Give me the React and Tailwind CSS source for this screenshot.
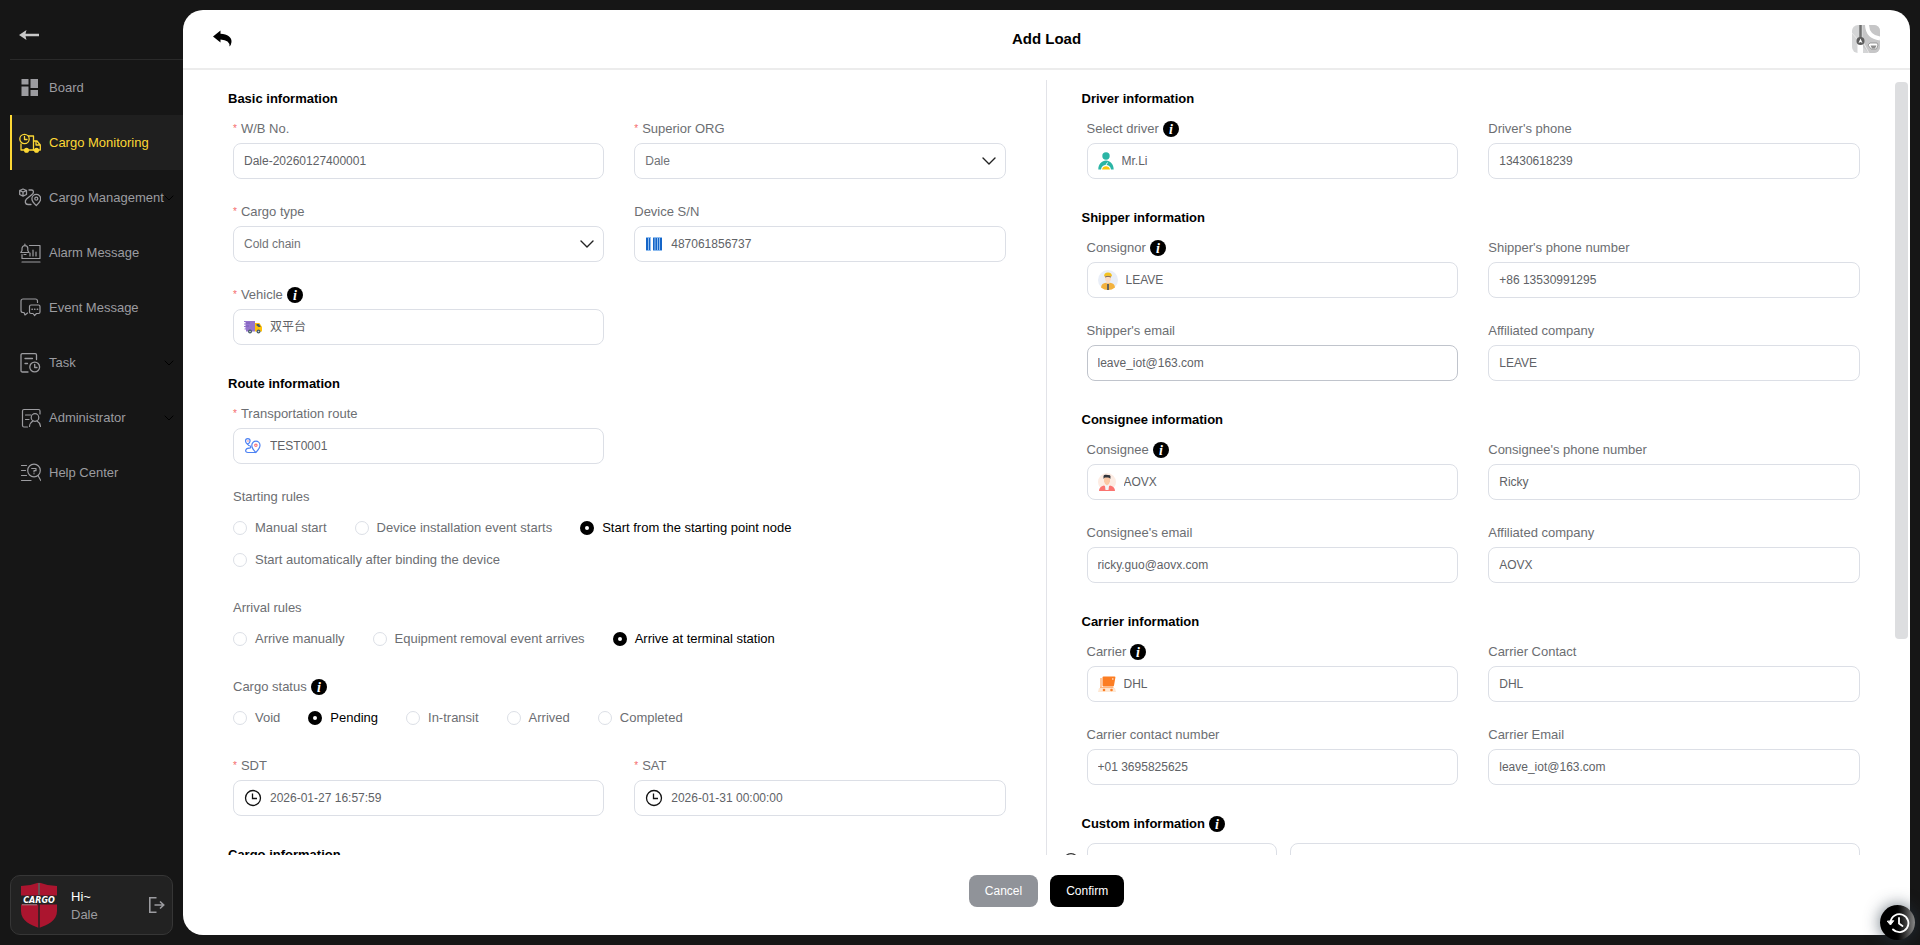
import React, { useId, useState } from "react";

const stroke = {
  fill: "none",
  stroke: "currentColor",
  strokeLinecap: "round",
  strokeLinejoin: "round",
};

function BoardIcon() {
  return (
    <svg width="22" height="22" viewBox="0 0 22 22" className="shrink-0" fill="currentColor">
      <rect x="2.500" y="2" width="7" height="5.500" />
      <rect x="11.500" y="2" width="7.500" height="9" />
      <rect x="2.500" y="9.500" width="7" height="9.500" />
      <rect x="11.500" y="13" width="7.500" height="6" />
    </svg>
  );
}

function MonitoringIcon() {
  return (
    <svg width="22" height="22" viewBox="0 0 22 22" className="shrink-0" {...stroke} strokeWidth="1.3">
      <circle cx="5.500" cy="7" r="4.700" />
      <path d="M5.500 4.500V7.500H8" />
      <path d="M9.500 4H14.500V18H10M2 12V18H5" />
      <path d="M14.500 9H18L21.300 13V18H20M14.500 18H15M17 9V13H21" />
      <circle cx="7.500" cy="18.300" r="1.900" fill="currentColor" />
      <circle cx="17.500" cy="18.300" r="1.900" fill="currentColor" />
    </svg>
  );
}

function ManagementIcon() {
  return (
    <svg width="22" height="22" viewBox="0 0 22 22" className="shrink-0" {...stroke} strokeWidth="1.3">
      <path d="M4 2L7.500 3.500V7.500L4 9.200L0.700 7.500V3.500ZM0.700 3.500L4 5.200L7.500 3.500M4 5.200V9" />
      <path d="M10 3H12.500C15 3 15 6 13 7.500L7.500 12C5.500 14 6 17.500 9 17.500H12" />
      <path d="M17.300 18.500C14.500 16 12.900 14 12.900 11.700A4.400 4.400 0 0 1 21.700 11.700C21.700 14 20 16 17.300 18.500Z" />
      <circle cx="17.300" cy="11.700" r="1.500" />
    </svg>
  );
}

function AlarmIcon() {
  return (
    <svg width="22" height="22" viewBox="0 0 22 22" className="shrink-0" {...stroke} strokeWidth="1.2">
      <path d="M10.500 3.500H21V16.500H3V12.500" />
      <path d="M3 8.500V6.500A2.900 2.900 0 0 1 8.800 6.500V8.500L10 10.500H1.800ZM5.900 2V3.200M5 12.500H7" />
      <path d="M11 14V11M14 14V8M17 14V10M3 20H21" />
    </svg>
  );
}

function EventIcon() {
  return (
    <svg width="22" height="22" viewBox="0 0 22 22" className="shrink-0" {...stroke} strokeWidth="1.2">
      <path d="M18.500 5.500V4A2 2 0 0 0 16.500 2H4A2 2 0 0 0 2 4V13.500A2 2 0 0 0 4 15.500H5L6 18L8.500 16" />
      <path d="M12 8H19.500A1.500 1.500 0 0 1 21 9.500V15A1.500 1.500 0 0 1 19.500 16.500H17.500L15.500 18.500L14 16.500H12A1.500 1.500 0 0 1 10.500 15V9.500A1.500 1.500 0 0 1 12 8Z" />
      <path d="M13 12.300H13.300M15.600 12.300H15.900M18.300 12.300H18.600" strokeWidth="1.500" />
    </svg>
  );
}

function TaskIcon() {
  return (
    <svg width="22" height="22" viewBox="0 0 22 22" className="shrink-0" {...stroke} strokeWidth="1.3">
      <path d="M17.500 7.500V3A1.300 1.300 0 0 0 16.200 1.700H3.300A1.300 1.300 0 0 0 2 3V18.700A1.300 1.300 0 0 0 3.300 20H9" />
      <path d="M6 6.500H13.500M6 11.500H8.500" />
      <circle cx="15.700" cy="15" r="4.900" />
      <path d="M15.700 12.300V15.500H18" />
    </svg>
  );
}

function AdminIcon() {
  return (
    <svg width="22" height="22" viewBox="0 0 22 22" className="shrink-0" {...stroke} strokeWidth="1.2">
      <path d="M21 7V4A1.500 1.500 0 0 0 19.500 2.500H5A1.500 1.500 0 0 0 3.500 4V18.500A1.500 1.500 0 0 0 5 20H8.500" />
      <path d="M6.500 8H12M6.500 12.500H10" />
      <circle cx="16" cy="10.500" r="3.800" />
      <path d="M10.500 19.500C10.800 16.500 12.500 14.800 14 14M18 14C20 15 21.200 17 21.500 19.500" />
    </svg>
  );
}

function HelpIcon() {
  return (
    <svg width="22" height="22" viewBox="0 0 22 22" className="shrink-0" {...stroke} strokeWidth="1.2">
      <path d="M2.500 3.500H7.500M2.500 8.500H6.500M2.500 13.500H7.500M2.500 18.500H12" />
      <circle cx="15" cy="8.500" r="6.300" />
      <path d="M19 13.500L21.800 18.500" />
      <path d="M12.700 6.500H17V8.700H15V10M15 11.600V11.800" />
    </svg>
  );
}

function ShieldLogo() {
  return (
    <svg width="38" height="46" viewBox="0 0 38 46">
      <path d="M19 0.500Q28 4 37 4V29C37 39 27 43 19 46C11 43 1 39 1 29V4Q10 4 19 0.500Z" fill="#ab152f" />
      <path d="M19 0V46" stroke="#222" strokeWidth="1.500" />
      <path d="M0 13.500H38V22.500H0Z" fill="#222" />
      <path d="M19 1V13M2 22.800H17" stroke="#a9a0a2" strokeWidth="0.800" />
      <text
        x="19"
        y="20.500"
        textAnchor="middle"
        fontSize="8"
        fontWeight="700"
        fontStyle="italic"
        fontFamily="'DejaVu Sans', sans-serif"
        fill="#fff"
      >
        CARGO
      </text>
    </svg>
  );
}

function InfoIcon({ className }) {
  return (
    <svg width="16" height="16" viewBox="0 0 16 16" className={className}>
      <circle cx="8" cy="8" r="8" fill="#000" />
      <text
        x="8"
        y="12.500"
        textAnchor="middle"
        fontSize="14"
        fontWeight="700"
        fontStyle="italic"
        fontFamily="'Liberation Serif', serif"
        fill="#fff"
      >
        i
      </text>
    </svg>
  );
}

function TruckIcon() {
  return (
    <svg width="18" height="14" viewBox="0 0 18 14">
      <path d="M0 1H11V11.500H2V9.500H0.500V8.500H1.500V7H0V6H1.500V4.500H0V3.500H1.500V2H0Z" fill="#9575cd" />
      <path d="M2 3H6M2 6H5" stroke="#6f4fb0" strokeWidth="0.600" />
      <path d="M11 3H15.500L18 7V11.500H11Z" fill="#ffc107" />
      <path d="M12.500 4H15L16.800 7H14.500L12.500 5.500Z" fill="#455a64" />
      <circle cx="6" cy="11.500" r="2" fill="#455a64" />
      <circle cx="6" cy="11.500" r="0.800" fill="#cfd8dc" />
      <circle cx="14.500" cy="11.500" r="2" fill="#455a64" />
      <circle cx="14.500" cy="11.500" r="0.800" fill="#cfd8dc" />
    </svg>
  );
}

function BarcodeIcon() {
  return (
    <svg width="18" height="14" viewBox="0 0 18 14">
      <path d="M1 0H6V14H1ZM8 0H17V14H8Z" fill="#8fbdf0" />
      <path
        d="M1 1H3V13H1ZM4 1H5V13H4ZM8 1H9.500V13H8ZM10.500 1H12V13H10.500ZM13 1H14V13H13ZM15 1H17V13H15Z"
        fill="#1565c8"
      />
    </svg>
  );
}

function RouteIcon() {
  return (
    <svg width="18" height="16" viewBox="0 0 18 16" fill="none" stroke="#4d82f3" strokeWidth="1.200" strokeLinecap="round">
      <path d="M3.800 6.500C2 5 1.500 4.200 1.500 3A2.300 2.300 0 0 1 6.100 3C6.100 4.200 5.500 5 3.800 6.500Z" />
      <path d="M4.500 7.500C7.500 7.500 7.500 10 5 10.200C1 10.500 0.500 14.500 4 14.500H11.500" />
      <path d="M11.800 14.500C8.800 11.500 7.800 9.500 7.800 7.300A4.100 4.100 0 0 1 16 7.300C16 9.500 14.800 11.500 11.800 14.500Z" />
      <circle cx="11.900" cy="7.300" r="1.200" stroke="#f8777f" />
      <circle cx="3.800" cy="3" r="0.500" stroke="#f8a0a5" strokeWidth="0.700" />
    </svg>
  );
}

function ClockIcon() {
  return (
    <svg width="18" height="18" viewBox="0 0 18 18" fill="none" stroke="#111" strokeWidth="1.300">
      <circle cx="9" cy="9" r="7.500" />
      <path d="M8.500 4.500V9.500H13" />
    </svg>
  );
}

function DriverIcon() {
  return (
    <svg width="16" height="18" viewBox="0 0 16 18">
      <circle cx="8" cy="4" r="3.700" fill="#2bb5a5" />
      <path d="M0.300 17.500C0.300 12 4 8.500 8 8.500C12 8.500 15.700 12 15.700 17.500H13C12.500 14.500 11 13 8 13C5 13 3.500 14.500 3 17.500Z" fill="#2bb5a5" />
      <path d="M7 14.500L9.500 10.500" stroke="#fff" strokeWidth="1" />
      <path d="M4 17.500C4.500 15.200 6 14.300 8 14.300C10 14.300 11.500 15.200 12 17.500Z" fill="#fdc60a" />
    </svg>
  );
}

function ConsignorIcon() {
  return (
    <svg width="20" height="20" viewBox="0 0 20 20">
      <circle cx="10" cy="10" r="10" fill="#e9eef7" />
      <path d="M3 17.500Q3.500 13 8 12.700H12Q16.500 13 17 17.500Q14 20 10 20Q6 20 3 17.500Z" fill="#f3b23e" />
      <path d="M7 6H13V9.500Q12.500 11 11.500 11.800V13.500H8.500V11.800Q7.300 11 7 9.500Z" fill="#fbdcc4" />
      <path d="M6 6.500Q6 2.500 10 2.500Q14 2.500 14 6.500Q10 4.800 6 6.500Z" fill="#f4c21f" />
      <path d="M7 7Q10 5.500 13 7" stroke="#5b4636" strokeWidth="0.800" fill="none" />
      <path d="M9.200 14H10.800V20H9.200Z" fill="#414f66" />
    </svg>
  );
}

function ConsigneeIcon() {
  return (
    <svg width="18" height="18" viewBox="0 0 18 18">
      <circle cx="9" cy="9" r="9" fill="#fdece3" />
      <path d="M1 18Q1 13.500 6 12.500L9 14.500L12 12.500Q17 13.500 17 18Z" fill="#fb7470" />
      <path d="M6.800 11.500H11.200L10.500 17H7.500Z" fill="#f3f4f6" />
      <path d="M6 4H12V8.500Q11.500 11 9 12.500Q6.500 11 6 8.500Z" fill="#fbc7a4" />
      <path d="M5.500 6V3Q6 1.500 8 1.800L12 2.200Q13 3 12.300 6Q12 4.500 10 4.500H7Q6 4.500 5.500 6Z" fill="#33363d" />
    </svg>
  );
}

function CarrierIcon() {
  return (
    <svg width="18" height="18" viewBox="0 0 18 18">
      <path d="M1 13H17L18 17H0Z" fill="#ffe8d3" />
      <path d="M2 3H4V12H2Z" fill="#ffc79c" />
      <path d="M5.500 1.500H16.500Q17.600 1.500 17.400 2.600L16 10.500Q15.800 11.500 14.800 11.500H5.500Q4.500 11.500 4.500 10.500V2.500Q4.500 1.500 5.500 1.500Z" fill="#fc7d22" />
      <path d="M14 3.500H15.500V4.500H14Z" fill="#fff" />
      <path d="M2 12.500H15.500" stroke="#fdb47e" strokeWidth="1.200" />
      <circle cx="6" cy="15" r="1.300" fill="#fc7d22" />
      <circle cx="13.500" cy="15" r="1.300" fill="#fc7d22" />
    </svg>
  );
}

function Chevron({ className }) {
  return (
    <svg width="14" height="8" viewBox="0 0 14 8" className={className} {...stroke} strokeWidth="1.400">
      <path d="M1 1L7 7L13 1" />
    </svg>
  );
}

const navItems = [
  { name: "Board", icon: BoardIcon },
  { name: "Cargo Monitoring", icon: MonitoringIcon, active: true },
  { name: "Cargo Management", icon: ManagementIcon, more: true },
  { name: "Alarm Message", icon: AlarmIcon },
  { name: "Event Message", icon: EventIcon },
  { name: "Task", icon: TaskIcon, more: true },
  { name: "Administrator", icon: AdminIcon, more: true },
  { name: "Help Center", icon: HelpIcon },
];

function Sidebar() {
  return (
    <aside className="flex w-[173px] shrink-0 flex-col">
      <div className="flex h-[50px] items-center border-b border-[#2a2a2a] pl-[9px] text-[#c8c8c8]">
        <button aria-label="Collapse menu">
          <svg width="20" height="10" viewBox="0 0 20 10">
            <path d="M0 5L7.500 0L6.500 3.700H20V6.300H6.500L7.500 10Z" fill="currentColor" />
          </svg>
        </button>
      </div>
      <nav>
        {navItems.map((item) => (
          <a
            key={item.name}
            href="#"
            className={`flex h-[55px] items-center border-l-2 pl-[7px] text-[13px] ${
              item.active
                ? "border-[#fdd835] bg-[#1f1f1f] text-[#fdd835]"
                : "border-transparent text-[#9c9ca0]"
            }`}
          >
            <item.icon />
            <span className="ml-2 min-w-0 flex-1 whitespace-nowrap">{item.name}</span>
            {item.more && (
              <svg width="10" height="6" viewBox="0 0 10 6" className="mr-[9px] shrink-0 text-black" {...stroke}>
                <path d="M1 1L5 5L9 1" />
              </svg>
            )}
          </a>
        ))}
      </nav>
      <div className="mt-auto mr-[10px] flex h-[60px] items-center rounded-[10px] border border-[#363636] bg-[#222] pl-[9px] pr-[7px]">
        <ShieldLogo />
        <div className="ml-[13px] flex-1 pt-[2px] text-[13px] leading-[18px]">
          <p className="text-white">Hi~</p>
          <p className="text-[#9c9ca0]">Dale</p>
        </div>
        <button aria-label="Log out" className="text-[#9c9ca0]">
          <svg width="16" height="16" viewBox="0 0 16 16" fill="none" stroke="currentColor" strokeWidth="1.600">
            <path d="M7.500 0.800H0.800V15.200H7.500M5.500 8H14.500M11 4.500L14.700 8L11 11.500" />
          </svg>
        </button>
      </div>
    </aside>
  );
}

function Section({ title, info, children }) {
  return (
    <section className="mb-[6px]">
      <h2 className="-ml-[5px] flex h-[30px] items-center pt-px text-[13px] font-bold text-black">
        {title}
        {info && <InfoIcon className="ml-1" />}
      </h2>
      {children}
    </section>
  );
}

function FieldLabel({ as: Tag = "label", required, info, children, ...rest }) {
  return (
    <Tag className="flex h-[30px] items-center pt-px text-[13px] text-[#6c6e72]" {...rest}>
      {required && <span className="mr-1 text-[10px] text-[#f56c6c]">*</span>}
      {children}
      {info && <InfoIcon className="ml-1" />}
    </Tag>
  );
}

function Field({ label, value, icon: Icon, required, info, hovered }) {
  const id = useId();
  return (
    <div className="mb-[17px]">
      <FieldLabel htmlFor={id} required={required} info={info}>
        {label}
      </FieldLabel>
      <div
        className={`flex h-9 items-center gap-2 rounded-lg border px-[10px] ${
          hovered ? "border-[#c0c4cc]" : "border-[#dcdfe6]"
        }`}
      >
        {Icon && <Icon />}
        <input
          id={id}
          defaultValue={value}
          className="min-w-0 flex-1 text-[12px] text-[#606266] outline-none"
        />
      </div>
    </div>
  );
}

function SelectField({ label, value }) {
  const id = useId();
  return (
    <div className="mb-[17px]">
      <FieldLabel htmlFor={id} required>
        {label}
      </FieldLabel>
      <div className="relative">
        <select
          id={id}
          className="block h-9 w-full appearance-none rounded-lg border border-[#dcdfe6] px-[10px] text-[12px] text-[#707276] outline-none"
        >
          <option>{value}</option>
        </select>
        <Chevron className="pointer-events-none absolute top-[14px] right-[10px] text-[#222]" />
      </div>
    </div>
  );
}

function RadioField({ label, info, options, initial }) {
  const name = useId();
  const [picked, setPicked] = useState(initial);
  return (
    <div className="mb-[17px]" role="radiogroup" aria-label={label}>
      <FieldLabel as="div" info={info}>
        {label}
      </FieldLabel>
      <div className="flex max-w-[620px] flex-wrap gap-x-7">
        {options.map((option) => (
          <label
            key={option}
            className={`flex h-8 items-center gap-2 pt-px text-[13px] ${
              picked === option ? "text-black" : "text-[#6c6e72]"
            }`}
          >
            <input
              type="radio"
              name={name}
              checked={picked === option}
              onChange={() => setPicked(option)}
              className="size-[14px] appearance-none rounded-full border border-[#dcdfe6] bg-white checked:border-[5px] checked:border-black"
            />
            {option}
          </label>
        ))}
      </div>
    </div>
  );
}

function Row({ children }) {
  return <div className="grid grid-cols-2 gap-x-[30px]">{children}</div>;
}

function LeftPanel() {
  return (
    <div className="w-1/2 overflow-hidden border-r border-[#e2e3e8] pt-[3px] pr-[40px] pl-[50px]">
      <Section title="Basic information">
        <Row>
          <Field label="W/B No." value="Dale-20260127400001" required />
          <SelectField label="Superior ORG" value="Dale" />
          <SelectField label="Cargo type" value="Cold chain" />
          <Field label="Device S/N" value="487061856737" icon={BarcodeIcon} />
          <Field label="Vehicle" value="双平台" icon={TruckIcon} required info />
        </Row>
      </Section>
      <Section title="Route information">
        <Row>
          <Field label="Transportation route" value="TEST0001" icon={RouteIcon} required />
        </Row>
        <RadioField
          label="Starting rules"
          initial="Start from the starting point node"
          options={[
            "Manual start",
            "Device installation event starts",
            "Start from the starting point node",
            "Start automatically after binding the device",
          ]}
        />
        <RadioField
          label="Arrival rules"
          initial="Arrive at terminal station"
          options={["Arrive manually", "Equipment removal event arrives", "Arrive at terminal station"]}
        />
        <RadioField
          label="Cargo status"
          info
          initial="Pending"
          options={["Void", "Pending", "In-transit", "Arrived", "Completed"]}
        />
        <Row>
          <Field label="SDT" value="2026-01-27 16:57:59" icon={ClockIcon} required />
          <Field label="SAT" value="2026-01-31 00:00:00" icon={ClockIcon} required />
        </Row>
      </Section>
      <Section title="Cargo information" />
    </div>
  );
}

function RightPanel() {
  return (
    <div className="relative w-1/2 overflow-hidden pt-[3px] pr-[50px] pl-[40px]">
      <Section title="Driver information">
        <Row>
          <Field label="Select driver" value="Mr.Li" icon={DriverIcon} info />
          <Field label="Driver's phone" value="13430618239" />
        </Row>
      </Section>
      <Section title="Shipper information">
        <Row>
          <Field label="Consignor" value="LEAVE" icon={ConsignorIcon} info />
          <Field label="Shipper's phone number" value="+86 13530991295" />
          <Field label="Shipper's email" value="leave_iot@163.com" hovered />
          <Field label="Affiliated company" value="LEAVE" />
        </Row>
      </Section>
      <Section title="Consignee information">
        <Row>
          <Field label="Consignee" value="AOVX" icon={ConsigneeIcon} info />
          <Field label="Consignee's phone number" value="Ricky" />
          <Field label="Consignee's email" value="ricky.guo@aovx.com" />
          <Field label="Affiliated company" value="AOVX" />
        </Row>
      </Section>
      <Section title="Carrier information">
        <Row>
          <Field label="Carrier" value="DHL" icon={CarrierIcon} info />
          <Field label="Carrier Contact" value="DHL" />
          <Field label="Carrier contact number" value="+01 3695825625" />
          <Field label="Carrier Email" value="leave_iot@163.com" />
        </Row>
      </Section>
      <Section title="Custom information" info>
        <div className="-ml-6 flex items-center pt-[5px]">
          <button aria-label="Remove field" className="mr-2 text-[#333]">
            <svg width="16" height="16" viewBox="0 0 16 16" {...stroke} strokeWidth="1.200">
              <circle cx="8" cy="8" r="7.300" />
              <path d="M5 8H11" />
            </svg>
          </button>
          <input aria-label="Field name" className="h-9 w-[190px] rounded-lg border border-[#dcdfe6]" />
          <input aria-label="Field value" className="ml-[13px] h-9 flex-1 rounded-lg border border-[#dcdfe6]" />
        </div>
      </Section>
      <div className="absolute top-[2px] right-[2px] h-[557px] w-[13px] rounded bg-[#dddee0]" />
    </div>
  );
}

function App() {
  return (
    <div className="flex h-screen bg-[#161616] p-[10px] font-['Liberation_Sans','Noto_Sans_CJK_SC',sans-serif]">
      <Sidebar />
      <main className="flex min-w-0 flex-1 flex-col overflow-hidden rounded-[20px] bg-white">
        <header className="flex h-[60px] shrink-0 items-center justify-between border-b-2 border-[#ececec] px-[30px]">
          <button aria-label="Back" className="w-7 text-black">
            <svg width="20" height="18" viewBox="0 0 20 18">
              <path d="M0 6.500L7.500 0.500V3.800C14.500 4 19 7.500 18.500 12Q18.200 15 16.500 16.500Q17 10 7.500 9.500V12.500Z" fill="currentColor" />
            </svg>
          </button>
          <h1 className="text-[15px] font-bold text-black">Add Load</h1>
          <button aria-label="Map" className="overflow-hidden rounded-md">
            <svg width="28" height="28" viewBox="0 0 28 28">
              <path d="M0 0H28V28H0Z" fill="#d4d5d6" />
              <path d="M11 0H28V28H17L11 22Z" fill="#c6c6c7" />
              <path d="M5.500 17H11V28H5.500Z" fill="#fff" />
              <path d="M15 0Q15.500 12 28 13.500" fill="none" stroke="#fff" strokeWidth="4" />
              <path d="M0 8L6 15M11 17L17 28" stroke="#e8e8e8" />
              <path d="M8.500 0V13" stroke="#707070" strokeWidth="2.500" />
              <circle cx="8.500" cy="16" r="4" fill="#5c5c5c" />
              <path d="M8.500 13.500L10.500 18L8.500 17L6.500 18Z" fill="#fff" />
              <path d="M16 20L18 18H25L26 20L24.500 24H19Z" fill="#fff" stroke="#8b8b8b" strokeWidth="0.800" />
              <path d="M18.500 20.500H24.500L23 23.500H20Z" fill="#8b8b8b" />
            </svg>
          </button>
        </header>
        <div className="flex min-h-0 flex-1 pt-[10px]">
          <LeftPanel />
          <RightPanel />
        </div>
        <footer className="flex h-20 shrink-0 items-start justify-center gap-3 pt-5 text-[12px] text-white">
          <button className="h-8 rounded-lg bg-[#909399] px-4">Cancel</button>
          <button className="h-8 rounded-lg bg-black px-4">Confirm</button>
        </footer>
      </main>
      <button
        aria-label="History"
        className="fixed right-[5px] bottom-[5px] flex size-[35px] items-center justify-center rounded-full bg-linear-to-r from-black from-40% to-[#8a8a8a] text-white shadow-[0_0_16px_rgba(40,55,70,0.7)]"
      >
        <svg width="24" height="22" viewBox="0 0 24 22" fill="none" stroke="currentColor" strokeWidth="1.800" strokeLinecap="round">
          <path d="M4.500 10A9 9 0 1 1 7 17.500" />
          <path d="M13 6V11.500L16.500 14" />
          <path d="M1.500 9.500L4.500 13L7.500 9Z" fill="currentColor" strokeWidth="1" />
        </svg>
      </button>
    </div>
  );
}

export default App;
